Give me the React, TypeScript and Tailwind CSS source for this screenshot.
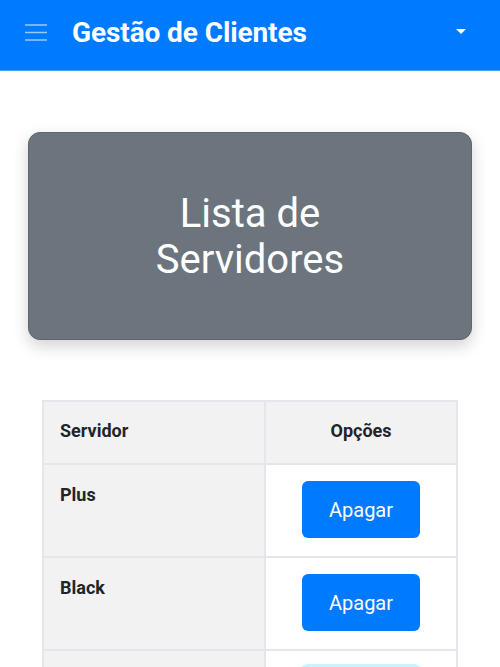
import React from 'react';

interface Server {
    name: string;
}

const servers: Server[] = [{ name: 'Plus' }, { name: 'Black' }, { name: 'Gold' }];

const Navbar: React.FC = () => (
    <nav className="h-[71px] bg-[#007bff] border-b border-[#4da3ff] flex items-center pb-[5px] pl-[25px] pr-[34px]">
        <svg width="22" height="17" viewBox="0 0 22 17" className="shrink-0">
            <path d="M0 1h22M0 8.5h22M0 16h22" stroke="rgba(255,255,255,0.6)" strokeWidth="1.6" />
        </svg>
        <h1 className="ml-[25px] text-[28px] font-bold text-white leading-none tracking-[-0.1px]">Gestão de Clientes</h1>
        <span className="ml-auto mb-[3px] w-0 h-0 border-l-[5px] border-r-[5px] border-t-[5px] border-l-transparent border-r-transparent border-t-white" />
    </nav>
);

const App: React.FC = () => {
    return (
        <div className="min-h-[667px] bg-white font-['Roboto','Liberation_Sans',sans-serif] text-[#212529]">
            <Navbar />
            <div className="px-[28px] pt-[61px]">
                <div className="h-[208px] rounded-[12px] bg-[#6c757d] border border-[#5f666d] shadow-[0_6px_16px_rgba(0,0,0,0.18)] flex items-center justify-center">
                    <h2 className="text-white text-[40px] leading-[46px] text-center px-20 mt-[2px]">Lista de Servidores</h2>
                </div>
            </div>
            <div className="px-[42px] pt-[60px]">
                <table className="w-full border-collapse border border-[#e3e6ea] text-[18px]">
                    <thead>
                        <tr className="h-[63px] bg-[#f2f2f2]">
                            <th className="w-[222px] border-2 border-[#e3e6ea] text-left font-bold pl-[16px] pb-[4px]">Servidor</th>
                            <th className="border-2 border-[#e3e6ea] text-center font-bold pb-[4px]">Opções</th>
                        </tr>
                    </thead>
                    <tbody>
                        {servers.map((s, i) => (
                            <tr key={s.name} className="h-[93px]">
                                <td className="bg-[#f2f2f2] border-2 border-[#e3e6ea] align-top font-bold pl-[16px] pt-[16px]">{s.name}</td>
                                <td className="bg-white border-2 border-[#e3e6ea] align-top pt-[16px] text-center">
                                    <button
                                        type="button"
                                        className={
                                            i === 2
                                                ? 'w-[118px] h-[57px] rounded-[6px] bg-[#007bff] text-white text-[20px] ring-[3px] ring-[#c8f4fb]'
                                                : 'w-[118px] h-[57px] rounded-[6px] bg-[#007bff] text-white text-[20px]'
                                        }
                                    >
                                        Apagar
                                    </button>
                                </td>
                            </tr>
                        ))}
                    </tbody>
                </table>
            </div>
        </div>
    );
};

export default App;
